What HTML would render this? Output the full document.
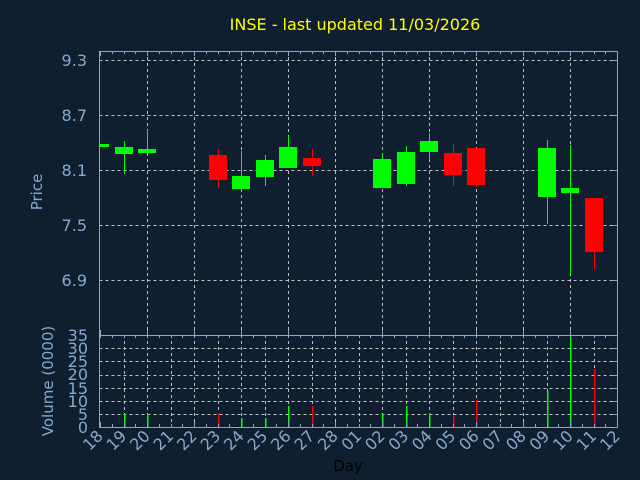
<!DOCTYPE html>
<html><head><meta charset="utf-8"><style>
html,body{margin:0;padding:0;background:#0f1f30;}
svg{display:block}
text{font-family:"DejaVu Sans","Liberation Sans",sans-serif;}
</style></head><body>
<svg id="s" width="640" height="480" viewBox="0 0 640 480" xmlns="http://www.w3.org/2000/svg">
<rect width="640" height="480" fill="#0f1f30"/>
<g id="grid" stroke="#c0c0c0" stroke-width="1" stroke-dasharray="3,3" fill="none"></g>
<g id="bars"></g>
<g id="axes" stroke="#88a8d0" stroke-width="1" fill="none"></g>
<text x="355" y="30" fill="#ffff00" font-size="16" text-anchor="middle">INSE - last updated 11/03/2026</text>
<g fill="#88a8d0" font-size="16" text-anchor="end">
<text x="87" y="66">9.3</text>
<text x="87" y="121">8.7</text>
<text x="87" y="176">8.1</text>
<text x="87" y="231">7.5</text>
<text x="87" y="286">6.9</text>
</g>
<g fill="#88a8d0" font-size="16" text-anchor="end">
<text x="88" y="341">35</text>
<text x="88" y="354">30</text>
<text x="88" y="367">25</text>
<text x="88" y="380">20</text>
<text x="88" y="394">15</text>
<text x="88" y="407">10</text>
<text x="88" y="420">5</text>
<text x="88" y="433">0</text>
</g>
<text transform="translate(42,192) rotate(-90)" fill="#88a8d0" font-size="15" text-anchor="middle">Price</text>
<text transform="translate(53,381) rotate(-90)" fill="#88a8d0" font-size="15" text-anchor="middle">Volume (0000)</text>
<text x="348" y="471" fill="#000000" font-size="15" text-anchor="middle">Day</text>
<g id="days" fill="#88a8d0" font-size="16" text-anchor="end">
<text transform="translate(104,437) rotate(-45)">18</text>
<text transform="translate(127.5,437) rotate(-45)">19</text>
<text transform="translate(151,437) rotate(-45)">20</text>
<text transform="translate(174.5,437) rotate(-45)">21</text>
<text transform="translate(198,437) rotate(-45)">22</text>
<text transform="translate(221.5,437) rotate(-45)">23</text>
<text transform="translate(245,437) rotate(-45)">24</text>
<text transform="translate(268.5,437) rotate(-45)">25</text>
<text transform="translate(292,437) rotate(-45)">26</text>
<text transform="translate(315.5,437) rotate(-45)">27</text>
<text transform="translate(339,437) rotate(-45)">28</text>
<text transform="translate(362.5,437) rotate(-45)">01</text>
<text transform="translate(386,437) rotate(-45)">02</text>
<text transform="translate(409.5,437) rotate(-45)">03</text>
<text transform="translate(433,437) rotate(-45)">04</text>
<text transform="translate(456.5,437) rotate(-45)">05</text>
<text transform="translate(480,437) rotate(-45)">06</text>
<text transform="translate(503.5,437) rotate(-45)">07</text>
<text transform="translate(527,437) rotate(-45)">08</text>
<text transform="translate(550.5,437) rotate(-45)">09</text>
<text transform="translate(574,437) rotate(-45)">10</text>
<text transform="translate(597.5,437) rotate(-45)">11</text>
<text transform="translate(621,437) rotate(-45)">12</text>
</g>
</svg>
<script>
var NS="http://www.w3.org/2000/svg";
function el(p,t,a){var e=document.createElementNS(NS,t);for(var k in a)e.setAttribute(k,a[k]);document.getElementById(p).appendChild(e);return e;}
var L=99.5,R=617.5,T=51,VT=335,VB=427,D=23.5;
[60,115,170,225,280].forEach(function(y){el("grid","line",{x1:L,y1:y+.5,x2:612,y2:y+.5});el("axes","line",{x1:612,y1:y+.5,x2:R,y2:y+.5});});
for(var i=2;i<22;i+=2){var x=Math.round(100+i*D)+.5;el("grid","line",{x1:x,y1:T,x2:x,y2:VT});}
[348,361,374.5,388,401,414].forEach(function(y){el("grid","line",{x1:L,y1:Math.round(y)+.5,x2:612,y2:Math.round(y)+.5});el("axes","line",{x1:612,y1:Math.round(y)+.5,x2:R,y2:Math.round(y)+.5});});
for(var i=1;i<22;i++){var x=Math.round(100+i*D)+.5;el("grid","line",{x1:x,y1:VT,x2:x,y2:VB});}
var G="#00ff00",Rd="#ff0000";
var c=[[0,G,144,147,144,147],[1,G,147,154,141,174],[2,G,149,153,130,153],[5,Rd,155,180,149,188],[6,G,176,189,151,189],[7,G,160,177,155,186],[8,G,147,168,136,168],[9,Rd,158,166,149,176],
[12,G,159,188,154,188],[13,G,152,184,146,186],[14,G,141,152,133,160],[15,Rd,153,175,144,186],[16,Rd,148,185,148,187],[19,G,148,197,140,224],[20,G,188,193,145,275],[21,Rd,198,252,198,269]];
c.forEach(function(d){var cx=Math.round(100+d[0]*D);var x0=Math.max(100,cx-9);var x1=cx+9;
el("bars","rect",{x:cx,y:d[4],width:1,height:d[5]-d[4],fill:d[1]});
el("bars","rect",{x:x0,y:d[2],width:x1-x0,height:d[3]-d[2],fill:d[1]});});
var v=[[1,G,414],[2,G,414],[5,Rd,413],[6,G,418],[7,G,418],[8,G,406],[9,Rd,406],[12,G,414],[13,G,406],[14,G,413],[15,Rd,415],[16,Rd,400],[19,G,391],[20,G,337],[21,Rd,369]];
v.forEach(function(d){var cx=Math.round(100+d[0]*D);el("bars","rect",{x:cx,y:d[2],width:1.5,height:VB-d[2],fill:d[1]});});
el("axes","line",{x1:L,y1:T+.5,x2:R,y2:T+.5});
el("axes","line",{x1:L,y1:T,x2:L,y2:VB+.5});
el("axes","line",{x1:R,y1:T,x2:R,y2:VB+.5});
el("axes","line",{x1:L,y1:VT+.5,x2:R,y2:VT+.5});
el("axes","line",{x1:L,y1:VB+.5,x2:R,y2:VB+.5});
for(var i=0;i<=44;i++){var x=Math.round(100+i*D/2)+.5;if(x>R)break;var big=i%4==0;
el("axes","line",{x1:x,y1:T,x2:x,y2:T+(big?5:3)});
el("axes","line",{x1:x,y1:VT,x2:x,y2:VT-(big?5:0)});
el("axes","line",{x1:x,y1:VB,x2:x,y2:VB-(big?5:3)});
el("axes","line",{x1:x,y1:VT,x2:x,y2:VT+3});}
</script>
</body></html>
